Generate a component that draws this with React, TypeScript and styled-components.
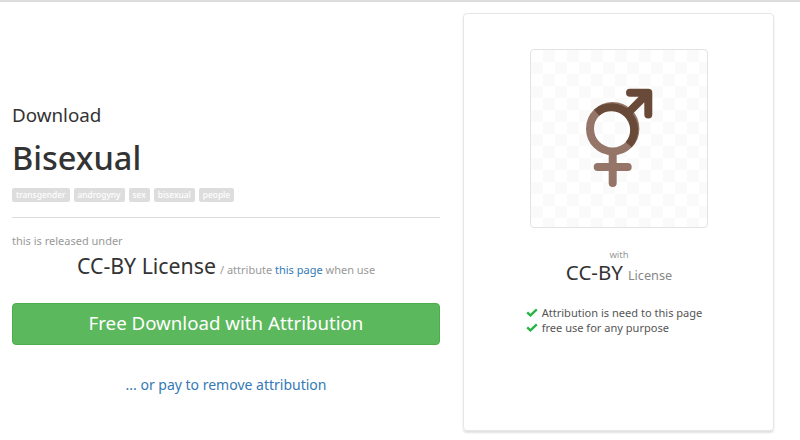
import React from "react";
import styled, { createGlobalStyle } from "styled-components";

const GlobalStyle = createGlobalStyle`
  html, body {
    margin: 0;
    padding: 0;
    background: #fff;
    font-family: "Noto Sans", "Open Sans", sans-serif;
    color: #333;
  }
`;

const Page = styled.div`
  box-sizing: border-box;
  width: 800px;
  height: 440px;
  overflow: hidden;
  border-top: 2px solid #ddd;
  padding: 11px 26px 0 12px;
  display: grid;
  grid-template-columns: 428px 311px;
  column-gap: 23px;
`;

const Main = styled.div`
  display: flex;
  flex-direction: column;
  padding-top: 90px;
`;

const Eyebrow = styled.div`
  font-size: 18.8px;
  line-height: 24px;
  color: #333;
`;

const Title = styled.h1`
  margin: 11px 0 0;
  font-size: 32.5px;
  line-height: 40px;
  font-weight: 500;
  color: #333;
`;

const Tags = styled.div`
  display: flex;
  gap: 4px;
  margin-top: 10px;
`;

const Tag = styled.span`
  background: #ddd;
  color: #fff;
  font-size: 8.4px;
  font-weight: 500;
  line-height: 14px;
  padding: 0 4px;
  border-radius: 2px;
`;

const Divider = styled.hr`
  width: 100%;
  margin: 15px 0 0;
  border: 0;
  border-top: 1px solid #ddd;
`;

const Released = styled.div`
  margin-top: 15px;
  font-size: 11px;
  line-height: 16px;
  color: #999;
`;

const LicenseLine = styled.div`
  display: flex;
  justify-content: center;
  align-items: baseline;
  gap: 4px;
  height: 28px;
  margin-top: 2px;
  font-size: 11px;
  color: #999;
`;

const LicenseName = styled.span<{ $size: number }>`
  font-size: ${(p) => p.$size}px;
  color: #333;
`;

const TextLink = styled.a`
  color: #337ab7;
  text-decoration: none;
`;

const DownloadButton = styled.a`
  display: block;
  box-sizing: border-box;
  margin-top: 24px;
  height: 42px;
  line-height: 37px;
  background: #5cb85c;
  border: 1px solid #4cae4c;
  border-radius: 4px;
  color: #fff;
  font-size: 18.7px;
  text-align: center;
  text-decoration: none;
`;

const PayLink = styled(TextLink)`
  margin-top: 30px;
  text-align: center;
  font-size: 14px;
  line-height: 20px;
`;

const Card = styled.aside`
  box-sizing: border-box;
  height: 418px;
  border: 1px solid #e6e6e6;
  border-radius: 4px;
  box-shadow: 0 2px 2px rgba(0, 0, 0, 0.12);
  padding: 35px 0 0 1px;
  display: flex;
  flex-direction: column;
  align-items: center;
`;

const Preview = styled.div`
  box-sizing: border-box;
  width: 178px;
  height: 179px;
  border: 1px solid #e3e3e3;
  border-radius: 4px;
  background-color: #fff;
  background-image: conic-gradient(#fafafa 25%, transparent 0 50%, #fafafa 0 75%, transparent 0);
  background-size: 24px 24px;
  display: flex;
`;

const With = styled.div`
  margin-top: 20px;
  font-size: 9.5px;
  line-height: 13px;
  color: #999;
`;

const CardLicense = styled.div`
  display: flex;
  align-items: baseline;
  gap: 5px;
  line-height: 22px;
  font-size: 12.7px;
  color: #888;
`;

const Points = styled.ul`
  list-style: none;
  margin: 19px 10px 0 0;
  padding: 0;
  font-size: 11.05px;
  line-height: 15px;
  color: #555;
`;

const Point = styled.li`
  display: flex;
  align-items: center;
  gap: 4px;
`;

const Check = () => (
  <svg width="12" height="9" viewBox="0 0 12 9">
    <path d="M1.2 4.4l3.2 3L10.8 1.4" fill="none" stroke="#28b446" strokeWidth="2.4" />
  </svg>
);

const GenderIcon = () => (
  <svg width="176" height="177" viewBox="0 0 176 177">
    <g fill="none" strokeLinecap="round" strokeLinejoin="round" strokeWidth="8">
      <path d="M81.7 102v31M66.7 117h30" stroke="#957568" />
      <circle cx="81.7" cy="78.7" r="22.7" stroke="#957568" />
      <path d="M65.7 62.7A22.7 22.7 0 0 1 97.7 94.7" stroke="#694a38" strokeLinecap="butt" />
      <path d="M98 62l19-19M99 42.7h18.3v21.8" stroke="#694a38" />
    </g>
  </svg>
);

export default function App() {
  return (
    <Page>
      <GlobalStyle />
      <Main>
        <Eyebrow>Download</Eyebrow>
        <Title>Bisexual</Title>
        <Tags>
          {["transgender", "androgyny", "sex", "bisexual", "people"].map((t) => (
            <Tag key={t}>{t}</Tag>
          ))}
        </Tags>
        <Divider />
        <Released>this is released under</Released>
        <LicenseLine>
          <LicenseName $size={21.3}>CC-BY License</LicenseName>
          <span>
            / attribute <TextLink href="#">this page</TextLink> when use
          </span>
        </LicenseLine>
        <DownloadButton href="#">Free Download with Attribution</DownloadButton>
        <PayLink href="#">... or pay to remove attribution</PayLink>
      </Main>
      <Card>
        <Preview>
          <GenderIcon />
        </Preview>
        <With>with</With>
        <CardLicense>
          <LicenseName $size={20.5}>CC-BY</LicenseName>
          License
        </CardLicense>
        <Points>
          <Point>
            <Check />
            Attribution is need to this page
          </Point>
          <Point>
            <Check />
            free use for any purpose
          </Point>
        </Points>
      </Card>
    </Page>
  );
}
